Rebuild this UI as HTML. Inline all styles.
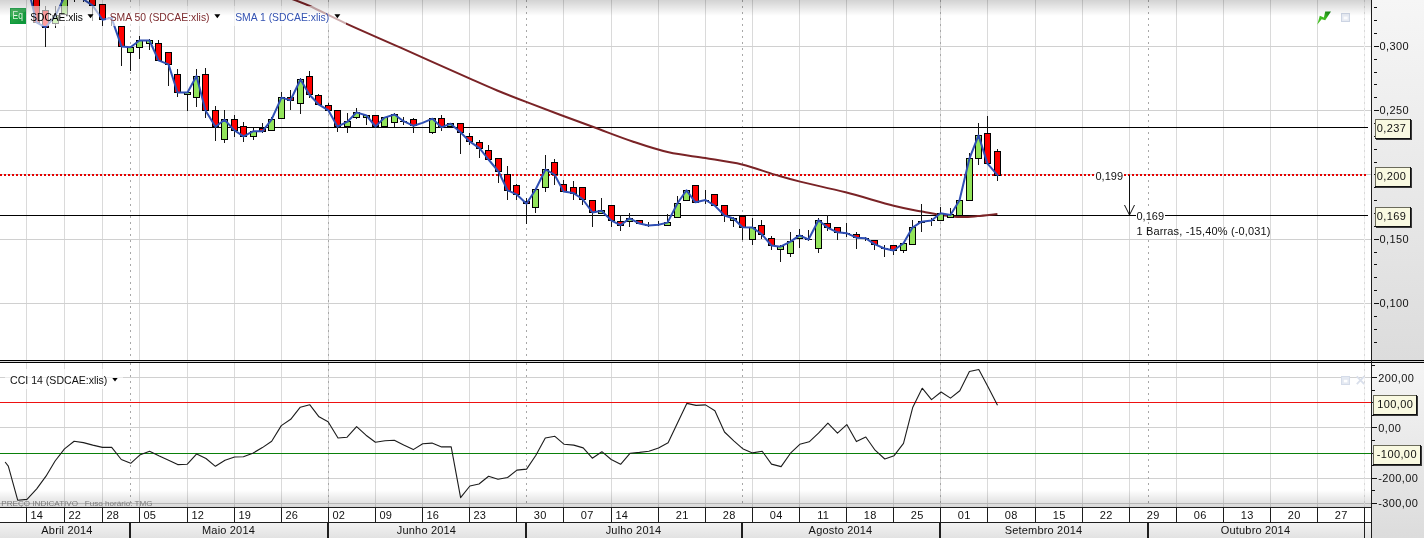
<!DOCTYPE html>
<html><head><meta charset="utf-8"><title>SDCAE:xlis</title>
<style>
html,body{margin:0;padding:0;background:#fff;}
body{width:1424px;height:538px;overflow:hidden;}
svg{display:block;font-family:"Liberation Sans",sans-serif;will-change:transform;}
</style></head><body>
<svg width="1424" height="538" viewBox="0 0 1424 538">
<defs>
<linearGradient id="gt" x1="0" y1="0" x2="0" y2="1"><stop offset="0" stop-color="#000" stop-opacity="0.175"/><stop offset="1" stop-color="#000" stop-opacity="0"/></linearGradient>
<linearGradient id="gb" x1="0" y1="0" x2="0" y2="1"><stop offset="0" stop-color="#000" stop-opacity="0"/><stop offset="1" stop-color="#000" stop-opacity="0.15"/></linearGradient>
<linearGradient id="ga1" x1="0" y1="0" x2="0" y2="1"><stop offset="0" stop-color="#f6f6f6"/><stop offset="1" stop-color="#dcdcdc"/></linearGradient>
<linearGradient id="ga2" x1="0" y1="0" x2="0" y2="1"><stop offset="0" stop-color="#f5f5f5"/><stop offset="1" stop-color="#dcdcdc"/></linearGradient>
<linearGradient id="gm" x1="0" y1="0" x2="0" y2="1"><stop offset="0" stop-color="#f2f2f2"/><stop offset="1" stop-color="#e2e2e2"/></linearGradient>
<linearGradient id="gi" x1="0" y1="0" x2="1" y2="1"><stop offset="0" stop-color="#35b04a"/><stop offset="1" stop-color="#0a9038"/></linearGradient>
<linearGradient id="gl" x1="0" y1="1" x2="1" y2="0"><stop offset="0" stop-color="#4cc828"/><stop offset="0.55" stop-color="#3cb820"/><stop offset="1" stop-color="#0e7a12"/></linearGradient>
<clipPath id="cm"><rect x="0" y="0" width="1371" height="360"/></clipPath>
<clipPath id="cl"><rect x="0" y="363" width="1371" height="144"/></clipPath>
</defs>
<rect x="0" y="0" width="1424" height="538" fill="#fff"/>

<rect x="1372" y="0" width="52" height="360" fill="url(#ga1)"/>
<rect x="1372" y="363" width="52" height="175" fill="url(#ga2)"/>
<g shape-rendering="crispEdges">
<rect x="26" y="0" width="1" height="360" fill="#dadada"/>
<rect x="26" y="363" width="1" height="144" fill="#dadada"/>
<rect x="64" y="0" width="1" height="360" fill="#dadada"/>
<rect x="64" y="363" width="1" height="144" fill="#dadada"/>
<rect x="102" y="0" width="1" height="360" fill="#dadada"/>
<rect x="102" y="363" width="1" height="144" fill="#dadada"/>
<rect x="139" y="0" width="1" height="360" fill="#dadada"/>
<rect x="139" y="363" width="1" height="144" fill="#dadada"/>
<rect x="187" y="0" width="1" height="360" fill="#dadada"/>
<rect x="187" y="363" width="1" height="144" fill="#dadada"/>
<rect x="234" y="0" width="1" height="360" fill="#dadada"/>
<rect x="234" y="363" width="1" height="144" fill="#dadada"/>
<rect x="281" y="0" width="1" height="360" fill="#dadada"/>
<rect x="281" y="363" width="1" height="144" fill="#dadada"/>
<rect x="328" y="0" width="1" height="360" fill="#dadada"/>
<rect x="328" y="363" width="1" height="144" fill="#dadada"/>
<rect x="375" y="0" width="1" height="360" fill="#dadada"/>
<rect x="375" y="363" width="1" height="144" fill="#dadada"/>
<rect x="422" y="0" width="1" height="360" fill="#dadada"/>
<rect x="422" y="363" width="1" height="144" fill="#dadada"/>
<rect x="469" y="0" width="1" height="360" fill="#dadada"/>
<rect x="469" y="363" width="1" height="144" fill="#dadada"/>
<rect x="516" y="0" width="1" height="360" fill="#dadada"/>
<rect x="516" y="363" width="1" height="144" fill="#dadada"/>
<rect x="563" y="0" width="1" height="360" fill="#dadada"/>
<rect x="563" y="363" width="1" height="144" fill="#dadada"/>
<rect x="611" y="0" width="1" height="360" fill="#dadada"/>
<rect x="611" y="363" width="1" height="144" fill="#dadada"/>
<rect x="658" y="0" width="1" height="360" fill="#dadada"/>
<rect x="658" y="363" width="1" height="144" fill="#dadada"/>
<rect x="705" y="0" width="1" height="360" fill="#dadada"/>
<rect x="705" y="363" width="1" height="144" fill="#dadada"/>
<rect x="752" y="0" width="1" height="360" fill="#dadada"/>
<rect x="752" y="363" width="1" height="144" fill="#dadada"/>
<rect x="799" y="0" width="1" height="360" fill="#dadada"/>
<rect x="799" y="363" width="1" height="144" fill="#dadada"/>
<rect x="846" y="0" width="1" height="360" fill="#dadada"/>
<rect x="846" y="363" width="1" height="144" fill="#dadada"/>
<rect x="893" y="0" width="1" height="360" fill="#dadada"/>
<rect x="893" y="363" width="1" height="144" fill="#dadada"/>
<rect x="940" y="0" width="1" height="360" fill="#dadada"/>
<rect x="940" y="363" width="1" height="144" fill="#dadada"/>
<rect x="987" y="0" width="1" height="360" fill="#dadada"/>
<rect x="987" y="363" width="1" height="144" fill="#dadada"/>
<rect x="1035" y="0" width="1" height="360" fill="#dadada"/>
<rect x="1035" y="363" width="1" height="144" fill="#dadada"/>
<rect x="1082" y="0" width="1" height="360" fill="#dadada"/>
<rect x="1082" y="363" width="1" height="144" fill="#dadada"/>
<rect x="1129" y="0" width="1" height="360" fill="#dadada"/>
<rect x="1129" y="363" width="1" height="144" fill="#dadada"/>
<rect x="1176" y="0" width="1" height="360" fill="#dadada"/>
<rect x="1176" y="363" width="1" height="144" fill="#dadada"/>
<rect x="1223" y="0" width="1" height="360" fill="#dadada"/>
<rect x="1223" y="363" width="1" height="144" fill="#dadada"/>
<rect x="1270" y="0" width="1" height="360" fill="#dadada"/>
<rect x="1270" y="363" width="1" height="144" fill="#dadada"/>
<rect x="1317" y="0" width="1" height="360" fill="#dadada"/>
<rect x="1317" y="363" width="1" height="144" fill="#dadada"/>
<rect x="0" y="46" width="1371" height="1" fill="#d0d0d0"/>
<rect x="0" y="110" width="1371" height="1" fill="#d0d0d0"/>
<rect x="0" y="174" width="1371" height="1" fill="#d0d0d0"/>
<rect x="0" y="239" width="1371" height="1" fill="#d0d0d0"/>
<rect x="0" y="303" width="1371" height="1" fill="#d0d0d0"/>
<rect x="0" y="377" width="1371" height="1" fill="#d0d0d0"/>
<rect x="0" y="427" width="1371" height="1" fill="#d0d0d0"/>
<rect x="0" y="478" width="1371" height="1" fill="#d0d0d0"/>
<rect x="0" y="503" width="1371" height="1" fill="#d0d0d0"/>
</g>
<line x1="130.5" y1="0" x2="130.5" y2="360" stroke="#a8a8a8" stroke-width="1" stroke-dasharray="2,4" shape-rendering="crispEdges"/>
<line x1="130.5" y1="363" x2="130.5" y2="507" stroke="#a8a8a8" stroke-width="1" stroke-dasharray="2,4" shape-rendering="crispEdges"/>
<line x1="328.5" y1="0" x2="328.5" y2="360" stroke="#a8a8a8" stroke-width="1" stroke-dasharray="2,4" shape-rendering="crispEdges"/>
<line x1="328.5" y1="363" x2="328.5" y2="507" stroke="#a8a8a8" stroke-width="1" stroke-dasharray="2,4" shape-rendering="crispEdges"/>
<line x1="526.5" y1="0" x2="526.5" y2="360" stroke="#a8a8a8" stroke-width="1" stroke-dasharray="2,4" shape-rendering="crispEdges"/>
<line x1="526.5" y1="363" x2="526.5" y2="507" stroke="#a8a8a8" stroke-width="1" stroke-dasharray="2,4" shape-rendering="crispEdges"/>
<line x1="742.5" y1="0" x2="742.5" y2="360" stroke="#a8a8a8" stroke-width="1" stroke-dasharray="2,4" shape-rendering="crispEdges"/>
<line x1="742.5" y1="363" x2="742.5" y2="507" stroke="#a8a8a8" stroke-width="1" stroke-dasharray="2,4" shape-rendering="crispEdges"/>
<line x1="940.5" y1="0" x2="940.5" y2="360" stroke="#a8a8a8" stroke-width="1" stroke-dasharray="2,4" shape-rendering="crispEdges"/>
<line x1="940.5" y1="363" x2="940.5" y2="507" stroke="#a8a8a8" stroke-width="1" stroke-dasharray="2,4" shape-rendering="crispEdges"/>
<line x1="1148.5" y1="0" x2="1148.5" y2="360" stroke="#a8a8a8" stroke-width="1" stroke-dasharray="2,4" shape-rendering="crispEdges"/>
<line x1="1148.5" y1="363" x2="1148.5" y2="507" stroke="#a8a8a8" stroke-width="1" stroke-dasharray="2,4" shape-rendering="crispEdges"/>
<rect x="1364" y="0" width="1" height="360" fill="#f0f0f0" shape-rendering="crispEdges"/>
<rect x="1364" y="363" width="1" height="144" fill="#f0f0f0" shape-rendering="crispEdges"/>
<line x1="1364.5" y1="0" x2="1364.5" y2="360" stroke="#d9d9d9" stroke-width="1" stroke-dasharray="2,4" shape-rendering="crispEdges"/>
<line x1="1364.5" y1="363" x2="1364.5" y2="507" stroke="#d9d9d9" stroke-width="1" stroke-dasharray="2,4" shape-rendering="crispEdges"/>
<g shape-rendering="crispEdges">
<rect x="0" y="127" width="1368" height="1" fill="#000"/>
<rect x="0" y="215" width="1368" height="1" fill="#000"/>
</g>
<line x1="0" y1="175" x2="1368" y2="175" stroke="#e60000" stroke-width="2" stroke-dasharray="2,2" shape-rendering="crispEdges"/>
<g clip-path="url(#cm)">
<path d="M285.0 -3.5 C288.9 -2.0 298.4 1.0 308.6 5.5 C318.8 10.0 331.0 16.6 346.2 23.6 C361.4 30.6 379.5 38.3 400.0 47.4 C420.5 56.5 453.2 71.2 469.4 78.4 C485.6 85.6 487.5 86.5 497.2 90.5 C506.9 94.5 517.0 98.4 527.5 102.4 C538.0 106.4 548.7 110.5 560.0 114.7 C571.3 118.9 583.2 123.3 595.4 127.8 C607.6 132.3 621.1 137.6 633.3 141.7 C645.5 145.8 656.7 149.6 668.7 152.3 C680.7 155.0 693.1 156.1 705.3 158.1 C717.5 160.1 730.4 161.8 742.0 164.5 C753.6 167.2 765.2 171.8 774.9 174.6 C784.6 177.4 788.3 178.6 800.1 181.6 C811.9 184.6 830.0 188.3 845.6 192.3 C861.2 196.3 881.0 202.5 893.7 205.7 C906.4 208.9 914.2 210.1 922.0 211.6 C929.8 213.1 934.1 214.0 940.6 214.9 C947.1 215.8 954.6 216.8 960.8 217.0 C967.0 217.2 971.6 216.6 977.7 216.1 C983.8 215.6 994.1 214.4 997.4 214.1" fill="none" stroke="#7a2326" stroke-width="2" stroke-linejoin="round"/>
<g shape-rendering="crispEdges">
<rect x="33" y="-5" width="7" height="28" fill="#000"/>
<rect x="34" y="-4" width="5" height="26" fill="#ff0000"/>
<rect x="45" y="6" width="1" height="41" fill="#141414"/>
<rect x="42" y="10" width="7" height="18" fill="#000"/>
<rect x="43" y="11" width="5" height="16" fill="#ff0000"/>
<rect x="55" y="6" width="1" height="22" fill="#141414"/>
<rect x="52" y="15" width="7" height="9" fill="#000"/>
<rect x="53" y="16" width="5" height="7" fill="#92e45a"/>
<rect x="61" y="-5" width="7" height="20" fill="#000"/>
<rect x="62" y="-4" width="5" height="18" fill="#92e45a"/>
<rect x="74" y="-5" width="1" height="7" fill="#141414"/>
<rect x="83" y="-5" width="1" height="7" fill="#141414"/>
<rect x="92" y="-5" width="1" height="26" fill="#141414"/>
<rect x="89" y="-5" width="7" height="11" fill="#000"/>
<rect x="90" y="-4" width="5" height="9" fill="#ff0000"/>
<rect x="102" y="4" width="1" height="22" fill="#141414"/>
<rect x="99" y="4" width="7" height="16" fill="#000"/>
<rect x="100" y="5" width="5" height="14" fill="#ff0000"/>
<rect x="111" y="16" width="1" height="10" fill="#141414"/>
<rect x="108" y="17" width="7" height="1" fill="#000"/>
<rect x="121" y="26" width="1" height="40" fill="#141414"/>
<rect x="118" y="26" width="7" height="21" fill="#000"/>
<rect x="119" y="27" width="5" height="19" fill="#ff0000"/>
<rect x="130" y="46" width="1" height="25" fill="#141414"/>
<rect x="127" y="47" width="7" height="6" fill="#000"/>
<rect x="128" y="48" width="5" height="4" fill="#92e45a"/>
<rect x="139" y="36" width="1" height="23" fill="#141414"/>
<rect x="136" y="40" width="7" height="8" fill="#000"/>
<rect x="137" y="41" width="5" height="6" fill="#92e45a"/>
<rect x="149" y="39" width="1" height="11" fill="#141414"/>
<rect x="146" y="40" width="7" height="4" fill="#000"/>
<rect x="147" y="41" width="5" height="2" fill="#92e45a"/>
<rect x="158" y="40" width="1" height="21" fill="#141414"/>
<rect x="155" y="43" width="7" height="18" fill="#000"/>
<rect x="156" y="44" width="5" height="16" fill="#ff0000"/>
<rect x="168" y="52" width="1" height="34" fill="#141414"/>
<rect x="165" y="52" width="7" height="13" fill="#000"/>
<rect x="166" y="53" width="5" height="11" fill="#ff0000"/>
<rect x="177" y="69" width="1" height="28" fill="#141414"/>
<rect x="174" y="74" width="7" height="19" fill="#000"/>
<rect x="175" y="75" width="5" height="17" fill="#ff0000"/>
<rect x="187" y="92" width="1" height="19" fill="#141414"/>
<rect x="184" y="92" width="7" height="3" fill="#000"/>
<rect x="185" y="93" width="5" height="1" fill="#92e45a"/>
<rect x="196" y="69" width="1" height="38" fill="#141414"/>
<rect x="193" y="76" width="7" height="22" fill="#000"/>
<rect x="194" y="77" width="5" height="20" fill="#92e45a"/>
<rect x="205" y="68" width="1" height="50" fill="#141414"/>
<rect x="202" y="74" width="7" height="37" fill="#000"/>
<rect x="203" y="75" width="5" height="35" fill="#ff0000"/>
<rect x="215" y="106" width="1" height="35" fill="#141414"/>
<rect x="212" y="110" width="7" height="17" fill="#000"/>
<rect x="213" y="111" width="5" height="15" fill="#ff0000"/>
<rect x="224" y="110" width="1" height="33" fill="#141414"/>
<rect x="221" y="119" width="7" height="21" fill="#000"/>
<rect x="222" y="120" width="5" height="19" fill="#92e45a"/>
<rect x="234" y="115" width="1" height="22" fill="#141414"/>
<rect x="231" y="119" width="7" height="12" fill="#000"/>
<rect x="232" y="120" width="5" height="10" fill="#ff0000"/>
<rect x="243" y="122" width="1" height="20" fill="#141414"/>
<rect x="240" y="126" width="7" height="11" fill="#000"/>
<rect x="241" y="127" width="5" height="9" fill="#ff0000"/>
<rect x="253" y="128" width="1" height="12" fill="#141414"/>
<rect x="250" y="131" width="7" height="6" fill="#000"/>
<rect x="251" y="132" width="5" height="4" fill="#92e45a"/>
<rect x="262" y="123" width="1" height="10" fill="#141414"/>
<rect x="259" y="128" width="7" height="4" fill="#000"/>
<rect x="260" y="129" width="5" height="2" fill="#ff0000"/>
<rect x="271" y="117" width="1" height="14" fill="#141414"/>
<rect x="268" y="119" width="7" height="12" fill="#000"/>
<rect x="269" y="120" width="5" height="10" fill="#92e45a"/>
<rect x="281" y="92" width="1" height="27" fill="#141414"/>
<rect x="278" y="97" width="7" height="22" fill="#000"/>
<rect x="279" y="98" width="5" height="20" fill="#92e45a"/>
<rect x="290" y="90" width="1" height="20" fill="#141414"/>
<rect x="287" y="97" width="7" height="4" fill="#000"/>
<rect x="288" y="98" width="5" height="2" fill="#ff0000"/>
<rect x="300" y="78" width="1" height="36" fill="#141414"/>
<rect x="297" y="79" width="7" height="25" fill="#000"/>
<rect x="298" y="80" width="5" height="23" fill="#92e45a"/>
<rect x="309" y="71" width="1" height="27" fill="#141414"/>
<rect x="306" y="76" width="7" height="19" fill="#000"/>
<rect x="307" y="77" width="5" height="17" fill="#ff0000"/>
<rect x="318" y="94" width="1" height="11" fill="#141414"/>
<rect x="315" y="95" width="7" height="10" fill="#000"/>
<rect x="316" y="96" width="5" height="8" fill="#ff0000"/>
<rect x="328" y="103" width="1" height="8" fill="#141414"/>
<rect x="325" y="105" width="7" height="6" fill="#000"/>
<rect x="326" y="106" width="5" height="4" fill="#ff0000"/>
<rect x="337" y="110" width="1" height="22" fill="#141414"/>
<rect x="334" y="110" width="7" height="17" fill="#000"/>
<rect x="335" y="111" width="5" height="15" fill="#ff0000"/>
<rect x="347" y="113" width="1" height="20" fill="#141414"/>
<rect x="344" y="121" width="7" height="6" fill="#000"/>
<rect x="345" y="122" width="5" height="4" fill="#92e45a"/>
<rect x="356" y="108" width="1" height="11" fill="#141414"/>
<rect x="353" y="112" width="7" height="6" fill="#000"/>
<rect x="354" y="113" width="5" height="4" fill="#92e45a"/>
<rect x="366" y="115" width="1" height="10" fill="#141414"/>
<rect x="363" y="115" width="7" height="3" fill="#000"/>
<rect x="364" y="116" width="5" height="1" fill="#92e45a"/>
<rect x="372" y="115" width="7" height="12" fill="#000"/>
<rect x="373" y="116" width="5" height="10" fill="#ff0000"/>
<rect x="381" y="117" width="7" height="10" fill="#000"/>
<rect x="382" y="118" width="5" height="8" fill="#92e45a"/>
<rect x="394" y="113" width="1" height="14" fill="#141414"/>
<rect x="391" y="114" width="7" height="9" fill="#000"/>
<rect x="392" y="115" width="5" height="7" fill="#92e45a"/>
<rect x="403" y="117" width="1" height="8" fill="#141414"/>
<rect x="400" y="121" width="7" height="1" fill="#000"/>
<rect x="413" y="118" width="1" height="15" fill="#141414"/>
<rect x="410" y="119" width="7" height="7" fill="#000"/>
<rect x="411" y="120" width="5" height="5" fill="#ff0000"/>
<rect x="432" y="118" width="1" height="16" fill="#141414"/>
<rect x="429" y="118" width="7" height="15" fill="#000"/>
<rect x="430" y="119" width="5" height="13" fill="#92e45a"/>
<rect x="441" y="115" width="1" height="16" fill="#141414"/>
<rect x="438" y="118" width="7" height="10" fill="#000"/>
<rect x="439" y="119" width="5" height="8" fill="#ff0000"/>
<rect x="447" y="123" width="7" height="4" fill="#000"/>
<rect x="448" y="124" width="5" height="2" fill="#92e45a"/>
<rect x="460" y="123" width="1" height="31" fill="#141414"/>
<rect x="457" y="123" width="7" height="10" fill="#000"/>
<rect x="458" y="124" width="5" height="8" fill="#ff0000"/>
<rect x="469" y="133" width="1" height="12" fill="#141414"/>
<rect x="466" y="136" width="7" height="6" fill="#000"/>
<rect x="467" y="137" width="5" height="4" fill="#ff0000"/>
<rect x="479" y="140" width="1" height="18" fill="#141414"/>
<rect x="476" y="142" width="7" height="7" fill="#000"/>
<rect x="477" y="143" width="5" height="5" fill="#ff0000"/>
<rect x="488" y="145" width="1" height="15" fill="#141414"/>
<rect x="485" y="150" width="7" height="10" fill="#000"/>
<rect x="486" y="151" width="5" height="8" fill="#ff0000"/>
<rect x="498" y="158" width="1" height="25" fill="#141414"/>
<rect x="495" y="158" width="7" height="14" fill="#000"/>
<rect x="496" y="159" width="5" height="12" fill="#ff0000"/>
<rect x="507" y="166" width="1" height="34" fill="#141414"/>
<rect x="504" y="174" width="7" height="17" fill="#000"/>
<rect x="505" y="175" width="5" height="15" fill="#ff0000"/>
<rect x="516" y="184" width="1" height="16" fill="#141414"/>
<rect x="513" y="185" width="7" height="10" fill="#000"/>
<rect x="514" y="186" width="5" height="8" fill="#ff0000"/>
<rect x="526" y="198" width="1" height="26" fill="#141414"/>
<rect x="523" y="201" width="7" height="3" fill="#000"/>
<rect x="524" y="202" width="5" height="1" fill="#ff0000"/>
<rect x="535" y="188" width="1" height="25" fill="#141414"/>
<rect x="532" y="189" width="7" height="19" fill="#000"/>
<rect x="533" y="190" width="5" height="17" fill="#92e45a"/>
<rect x="545" y="155" width="1" height="37" fill="#141414"/>
<rect x="542" y="169" width="7" height="19" fill="#000"/>
<rect x="543" y="170" width="5" height="17" fill="#92e45a"/>
<rect x="554" y="159" width="1" height="26" fill="#141414"/>
<rect x="551" y="162" width="7" height="13" fill="#000"/>
<rect x="552" y="163" width="5" height="11" fill="#ff0000"/>
<rect x="563" y="180" width="1" height="12" fill="#141414"/>
<rect x="560" y="184" width="7" height="8" fill="#000"/>
<rect x="561" y="185" width="5" height="6" fill="#ff0000"/>
<rect x="573" y="181" width="1" height="19" fill="#141414"/>
<rect x="570" y="187" width="7" height="7" fill="#000"/>
<rect x="571" y="188" width="5" height="5" fill="#ff0000"/>
<rect x="582" y="187" width="1" height="18" fill="#141414"/>
<rect x="579" y="187" width="7" height="13" fill="#000"/>
<rect x="580" y="188" width="5" height="11" fill="#ff0000"/>
<rect x="592" y="200" width="1" height="27" fill="#141414"/>
<rect x="589" y="200" width="7" height="13" fill="#000"/>
<rect x="590" y="201" width="5" height="11" fill="#ff0000"/>
<rect x="601" y="198" width="1" height="16" fill="#141414"/>
<rect x="598" y="210" width="7" height="4" fill="#000"/>
<rect x="599" y="211" width="5" height="2" fill="#92e45a"/>
<rect x="611" y="205" width="1" height="22" fill="#141414"/>
<rect x="608" y="205" width="7" height="16" fill="#000"/>
<rect x="609" y="206" width="5" height="14" fill="#ff0000"/>
<rect x="620" y="215" width="1" height="16" fill="#141414"/>
<rect x="617" y="221" width="7" height="5" fill="#000"/>
<rect x="618" y="222" width="5" height="3" fill="#ff0000"/>
<rect x="629" y="213" width="1" height="14" fill="#141414"/>
<rect x="626" y="218" width="7" height="4" fill="#000"/>
<rect x="627" y="219" width="5" height="2" fill="#92e45a"/>
<rect x="636" y="220" width="7" height="4" fill="#000"/>
<rect x="637" y="221" width="5" height="2" fill="#ff0000"/>
<rect x="648" y="222" width="1" height="5" fill="#141414"/>
<rect x="645" y="225" width="7" height="1" fill="#000"/>
<rect x="658" y="221" width="1" height="5" fill="#141414"/>
<rect x="655" y="224" width="7" height="1" fill="#000"/>
<rect x="667" y="214" width="1" height="12" fill="#141414"/>
<rect x="664" y="222" width="7" height="4" fill="#000"/>
<rect x="665" y="223" width="5" height="2" fill="#92e45a"/>
<rect x="677" y="196" width="1" height="22" fill="#141414"/>
<rect x="674" y="203" width="7" height="15" fill="#000"/>
<rect x="675" y="204" width="5" height="13" fill="#92e45a"/>
<rect x="683" y="190" width="7" height="11" fill="#000"/>
<rect x="684" y="191" width="5" height="9" fill="#92e45a"/>
<rect x="692" y="185" width="7" height="18" fill="#000"/>
<rect x="693" y="186" width="5" height="16" fill="#ff0000"/>
<rect x="705" y="190" width="1" height="14" fill="#141414"/>
<rect x="702" y="200" width="7" height="1" fill="#000"/>
<rect x="711" y="194" width="7" height="12" fill="#000"/>
<rect x="712" y="195" width="5" height="10" fill="#ff0000"/>
<rect x="724" y="205" width="1" height="17" fill="#141414"/>
<rect x="721" y="205" width="7" height="11" fill="#000"/>
<rect x="722" y="206" width="5" height="9" fill="#ff0000"/>
<rect x="733" y="217" width="1" height="10" fill="#141414"/>
<rect x="730" y="218" width="7" height="3" fill="#000"/>
<rect x="731" y="219" width="5" height="1" fill="#92e45a"/>
<rect x="742" y="216" width="1" height="24" fill="#141414"/>
<rect x="739" y="216" width="7" height="12" fill="#000"/>
<rect x="740" y="217" width="5" height="10" fill="#ff0000"/>
<rect x="752" y="218" width="1" height="27" fill="#141414"/>
<rect x="749" y="227" width="7" height="13" fill="#000"/>
<rect x="750" y="228" width="5" height="11" fill="#92e45a"/>
<rect x="761" y="220" width="1" height="19" fill="#141414"/>
<rect x="758" y="225" width="7" height="10" fill="#000"/>
<rect x="759" y="226" width="5" height="8" fill="#ff0000"/>
<rect x="771" y="236" width="1" height="14" fill="#141414"/>
<rect x="768" y="238" width="7" height="8" fill="#000"/>
<rect x="769" y="239" width="5" height="6" fill="#ff0000"/>
<rect x="780" y="245" width="1" height="17" fill="#141414"/>
<rect x="777" y="246" width="7" height="4" fill="#000"/>
<rect x="778" y="247" width="5" height="2" fill="#92e45a"/>
<rect x="790" y="232" width="1" height="25" fill="#141414"/>
<rect x="787" y="241" width="7" height="13" fill="#000"/>
<rect x="788" y="242" width="5" height="11" fill="#92e45a"/>
<rect x="799" y="229" width="1" height="19" fill="#141414"/>
<rect x="796" y="235" width="7" height="4" fill="#000"/>
<rect x="797" y="236" width="5" height="2" fill="#92e45a"/>
<rect x="808" y="230" width="1" height="11" fill="#141414"/>
<rect x="805" y="239" width="7" height="1" fill="#000"/>
<rect x="818" y="218" width="1" height="35" fill="#141414"/>
<rect x="815" y="220" width="7" height="29" fill="#000"/>
<rect x="816" y="221" width="5" height="27" fill="#92e45a"/>
<rect x="827" y="215" width="1" height="16" fill="#141414"/>
<rect x="824" y="223" width="7" height="5" fill="#000"/>
<rect x="825" y="224" width="5" height="3" fill="#ff0000"/>
<rect x="837" y="227" width="1" height="13" fill="#141414"/>
<rect x="834" y="227" width="7" height="6" fill="#000"/>
<rect x="835" y="228" width="5" height="4" fill="#ff0000"/>
<rect x="846" y="223" width="1" height="14" fill="#141414"/>
<rect x="843" y="233" width="7" height="1" fill="#000"/>
<rect x="856" y="232" width="1" height="17" fill="#141414"/>
<rect x="853" y="234" width="7" height="4" fill="#000"/>
<rect x="854" y="235" width="5" height="2" fill="#ff0000"/>
<rect x="865" y="237" width="1" height="4" fill="#141414"/>
<rect x="862" y="238" width="7" height="1" fill="#000"/>
<rect x="874" y="240" width="1" height="10" fill="#141414"/>
<rect x="871" y="240" width="7" height="5" fill="#000"/>
<rect x="872" y="241" width="5" height="3" fill="#ff0000"/>
<rect x="884" y="245" width="1" height="12" fill="#141414"/>
<rect x="881" y="248" width="7" height="1" fill="#000"/>
<rect x="893" y="245" width="1" height="10" fill="#141414"/>
<rect x="890" y="245" width="7" height="6" fill="#000"/>
<rect x="891" y="246" width="5" height="4" fill="#ff0000"/>
<rect x="903" y="243" width="1" height="10" fill="#141414"/>
<rect x="900" y="243" width="7" height="8" fill="#000"/>
<rect x="901" y="244" width="5" height="6" fill="#92e45a"/>
<rect x="912" y="220" width="1" height="25" fill="#141414"/>
<rect x="909" y="227" width="7" height="18" fill="#000"/>
<rect x="910" y="228" width="5" height="16" fill="#92e45a"/>
<rect x="921" y="204" width="1" height="28" fill="#141414"/>
<rect x="918" y="221" width="7" height="2" fill="#000"/>
<rect x="931" y="218" width="1" height="8" fill="#141414"/>
<rect x="928" y="220" width="7" height="1" fill="#000"/>
<rect x="940" y="207" width="1" height="14" fill="#141414"/>
<rect x="937" y="213" width="7" height="8" fill="#000"/>
<rect x="938" y="214" width="5" height="6" fill="#92e45a"/>
<rect x="950" y="208" width="1" height="10" fill="#141414"/>
<rect x="947" y="214" width="7" height="4" fill="#000"/>
<rect x="948" y="215" width="5" height="2" fill="#92e45a"/>
<rect x="959" y="198" width="1" height="18" fill="#141414"/>
<rect x="956" y="200" width="7" height="16" fill="#000"/>
<rect x="957" y="201" width="5" height="14" fill="#92e45a"/>
<rect x="969" y="153" width="1" height="48" fill="#141414"/>
<rect x="966" y="158" width="7" height="43" fill="#000"/>
<rect x="967" y="159" width="5" height="41" fill="#92e45a"/>
<rect x="978" y="123" width="1" height="42" fill="#141414"/>
<rect x="975" y="135" width="7" height="24" fill="#000"/>
<rect x="976" y="136" width="5" height="22" fill="#92e45a"/>
<rect x="987" y="116" width="1" height="48" fill="#141414"/>
<rect x="984" y="133" width="7" height="31" fill="#000"/>
<rect x="985" y="134" width="5" height="29" fill="#ff0000"/>
<rect x="997" y="149" width="1" height="32" fill="#141414"/>
<rect x="994" y="151" width="7" height="25" fill="#000"/>
<rect x="995" y="152" width="5" height="23" fill="#ff0000"/>
</g>
<polyline points="26.5,-18.8 36.5,22.3 45.5,27.4 55.5,15.6 64.5,-3.5 74.5,-8.0 83.5,-0.5 92.5,5.3 102.5,19.8 111.5,17.8 121.5,46.4 130.5,47.2 139.5,40.5 149.5,40.5 158.5,60.4 168.5,64.4 177.5,92.5 187.5,92.5 196.5,76.1 205.5,110.4 215.5,126.7 224.5,119.8 234.5,130.4 243.5,136.4 253.5,131.2 262.5,131.3 271.5,119.7 281.5,97.6 290.5,100.3 300.5,79.5 309.5,94.7 318.5,104.3 328.5,110.4 337.5,126.7 347.5,121.7 356.5,112.4 366.5,115.5 375.5,126.5 384.5,117.6 394.5,114.5 403.5,121.2 413.5,125.8 422.5,122.9 432.5,118.7 441.5,127.4 450.5,123.7 460.5,132.2 469.5,141.4 479.5,148.2 488.5,159.5 498.5,171.5 507.5,190.3 516.5,194.3 526.5,203.7 535.5,189.7 545.5,169.5 554.5,174.5 563.5,191.4 573.5,193.1 582.5,199.0 592.5,212.5 601.5,210.8 611.5,220.6 620.5,225.2 629.5,218.4 639.5,223.5 648.5,225.5 658.5,224.8 667.5,222.6 677.5,203.2 686.5,190.3 695.5,202.3 705.5,200.0 714.5,205.4 724.5,215.5 733.5,218.5 742.5,227.3 752.5,227.6 761.5,234.0 771.5,245.5 780.5,246.7 790.5,241.6 799.5,235.4 808.5,239.5 818.5,220.2 827.5,227.6 837.5,232.3 846.5,233.2 856.5,237.7 865.5,238.2 874.5,244.1 884.5,248.5 893.5,250.5 903.5,243.3 912.5,227.6 921.5,221.7 931.5,220.5 940.5,213.2 950.5,214.9 959.5,200.3 969.5,158.3 978.5,135.4 987.5,163.6 997.5,175.2" fill="none" stroke="#2f4fb4" stroke-width="2" stroke-linejoin="round" stroke-linecap="round"/>
</g>
<g font-size="11px" fill="#111">
<rect x="1095" y="170" width="29" height="12" fill="#fff"/>
<text x="1095.5" y="180">0,199</text>
<rect x="1136" y="210" width="29" height="12" fill="#fff"/>
<text x="1136.5" y="220">0,169</text>
<text x="1136.5" y="235" letter-spacing="0.15">1 Barras, -15,40% (-0,031)</text>
</g>
<path d="M1129.5 175 L1129.5 215 M1124.5 205 L1129.5 215 L1134.5 205" fill="none" stroke="#111" stroke-width="1"/>
<g>
<rect x="28" y="6" width="71" height="20" fill="#fff" fill-opacity="0.62"/>
<rect x="106" y="6" width="119" height="20" fill="#fff" fill-opacity="0.62"/>
<rect x="232" y="6" width="114" height="20" fill="#fff" fill-opacity="0.62"/>
<rect x="10" y="8" width="16" height="16" fill="url(#gi)"/>
<rect x="10.5" y="8.5" width="15" height="15" fill="none" stroke="#0c9a3c" stroke-width="1"/>
<path d="M10 8 L26 8 L26 11.5 L10 17 Z" fill="#fff" fill-opacity="0.13"/>
<text x="12.6" y="19.2" font-size="10.5px" fill="#e4f7e4" textLength="10.4" lengthAdjust="spacingAndGlyphs">Eq</text>
<g font-size="10.5px">
<text x="30.2" y="20.5" fill="#000" textLength="52.8" lengthAdjust="spacingAndGlyphs">SDCAE:xlis</text>
<text x="109.7" y="20.5" fill="#7d2b2e" textLength="99.9" lengthAdjust="spacingAndGlyphs">SMA 50 (SDCAE:xlis)</text>
<text x="235.2" y="20.5" fill="#3453b3" textLength="94" lengthAdjust="spacingAndGlyphs">SMA 1 (SDCAE:xlis)</text>
</g>
<path d="M87.5 14.3 L93.5 14.3 L90.5 18.2 Z" fill="#000"/>
<path d="M214.3 14.3 L220.3 14.3 L217.3 18.2 Z" fill="#000"/>
<path d="M334.4 14.3 L340.4 14.3 L337.4 18.2 Z" fill="#000"/>
</g>
<path d="M1317.2 24.8 L1319.8 15.8 L1323.9 17.4 L1325.2 11.4 L1331 11.4 L1325.2 20.3 L1321.6 19.2 Z" fill="url(#gl)"/>
<rect x="1341.5" y="13.5" width="8" height="8" fill="#e6eaf2" stroke="#ccd4e3" stroke-width="1"/>
<rect x="1343.6" y="16.6" width="4" height="2.8" fill="#fafbfd"/>
<rect x="0" y="0" width="1371" height="16" fill="url(#gt)"/>
<g clip-path="url(#cl)">
<g shape-rendering="crispEdges">
<rect x="0" y="402" width="1371" height="1" fill="#ee1111"/>
<rect x="0" y="453" width="1371" height="1" fill="#0a800a"/>
</g>
<polyline points="5.1,462.0 8.3,466.1 17.7,500.2 27.0,499.4 36.7,488.8 46.0,476.2 55.1,461.0 64.5,448.9 74.1,441.3 83.4,442.6 92.8,445.1 102.4,447.4 111.7,447.4 121.3,459.5 130.7,463.3 140.3,454.7 149.6,451.2 159.3,456.0 168.6,460.3 177.7,464.6 187.1,464.3 196.7,453.9 206.0,458.5 215.4,466.3 225.0,460.3 234.6,457.0 243.4,456.7 252.8,453.2 262.4,447.6 271.7,441.3 281.3,425.6 290.7,419.3 300.3,407.2 309.7,404.7 319.0,416.8 328.1,421.8 338.0,438.0 347.1,437.2 356.6,426.6 366.0,435.2 375.4,442.3 385.0,440.8 394.3,440.3 403.7,445.1 413.3,449.6 422.7,443.8 432.0,443.1 441.6,446.9 451.2,446.9 460.6,497.7 469.9,486.0 479.0,484.0 488.6,476.2 498.0,479.2 507.6,477.5 516.9,470.1 526.6,469.1 535.9,455.2 545.3,438.0 554.9,436.3 564.2,444.3 573.8,445.1 583.2,447.9 592.3,458.2 601.9,451.7 611.2,459.5 620.6,464.3 630.2,453.2 639.5,452.4 648.9,451.2 658.5,447.9 668.1,442.8 677.5,423.1 686.8,403.4 696.1,405.4 705.5,404.9 714.9,410.7 724.5,432.0 733.8,440.8 743.2,449.1 752.5,452.9 762.2,451.2 771.5,464.1 781.1,466.6 790.5,453.2 799.8,444.3 809.2,441.8 818.5,433.2 827.9,423.1 837.5,433.2 846.8,424.6 856.4,441.6 865.8,437.0 875.1,450.2 884.8,459.0 894.1,455.7 903.5,443.3 912.8,407.2 922.2,388.2 931.5,399.6 941.1,392.0 950.5,398.1 959.8,390.8 969.4,371.5 978.8,369.5 988.1,387.0 997.5,405.2" fill="none" stroke="#1c1c1c" stroke-width="1.1" stroke-linejoin="round"/>
</g>
<rect x="5" y="369" width="118" height="20" fill="#fff" fill-opacity="0.62"/>
<text x="10.1" y="383.6" font-size="10.5px" fill="#111" textLength="97.3" lengthAdjust="spacingAndGlyphs">CCI 14 (SDCAE:xlis)</text>
<path d="M112.3 378 L117.7 378 L115 381.6 Z" fill="#000"/>
<text x="1.3" y="505.5" font-size="8.1px" fill="#8c8c8c" style="white-space:pre" xml:space="preserve">PREÇO INDICATIVO   Fuso horário: TMG</text>
<rect x="0" y="490" width="1371" height="17" fill="url(#gb)"/>
<rect x="1341.5" y="376.5" width="8" height="8" fill="#e4e9f2" stroke="#d5dce9" stroke-width="1"/>
<rect x="1343.8" y="379.8" width="3.6" height="2.6" fill="#ffffff"/>
<path d="M1356.8 376.3 L1364.2 384.2 M1364.2 376.3 L1356.8 384.2" stroke="#d9dfeb" stroke-width="1.8" fill="none"/>
<g shape-rendering="crispEdges">
<rect x="0" y="360" width="1424" height="1" fill="#000"/>
<rect x="0" y="361" width="1424" height="1" fill="#d8d8d8"/>
<rect x="0" y="362" width="1424" height="1" fill="#000"/>
<rect x="1371" y="0" width="1" height="538" fill="#1e1e1e"/>
<rect x="1374" y="7" width="3" height="1" fill="#111"/>
<rect x="1374" y="20" width="3" height="1" fill="#111"/>
<rect x="1374" y="33" width="3" height="1" fill="#111"/>
<rect x="1374" y="46" width="5" height="1" fill="#111"/>
<rect x="1374" y="59" width="3" height="1" fill="#111"/>
<rect x="1374" y="72" width="3" height="1" fill="#111"/>
<rect x="1374" y="84" width="3" height="1" fill="#111"/>
<rect x="1374" y="97" width="3" height="1" fill="#111"/>
<rect x="1374" y="110" width="5" height="1" fill="#111"/>
<rect x="1374" y="123" width="3" height="1" fill="#111"/>
<rect x="1374" y="136" width="3" height="1" fill="#111"/>
<rect x="1374" y="149" width="3" height="1" fill="#111"/>
<rect x="1374" y="162" width="3" height="1" fill="#111"/>
<rect x="1374" y="174" width="5" height="1" fill="#111"/>
<rect x="1374" y="187" width="3" height="1" fill="#111"/>
<rect x="1374" y="200" width="3" height="1" fill="#111"/>
<rect x="1374" y="213" width="3" height="1" fill="#111"/>
<rect x="1374" y="226" width="3" height="1" fill="#111"/>
<rect x="1374" y="239" width="5" height="1" fill="#111"/>
<rect x="1374" y="252" width="3" height="1" fill="#111"/>
<rect x="1374" y="264" width="3" height="1" fill="#111"/>
<rect x="1374" y="277" width="3" height="1" fill="#111"/>
<rect x="1374" y="290" width="3" height="1" fill="#111"/>
<rect x="1374" y="303" width="5" height="1" fill="#111"/>
<rect x="1374" y="316" width="3" height="1" fill="#111"/>
<rect x="1374" y="329" width="3" height="1" fill="#111"/>
<rect x="1374" y="342" width="3" height="1" fill="#111"/>
<rect x="1372" y="365" width="3" height="1" fill="#111"/>
<rect x="1372" y="377" width="5" height="1" fill="#111"/>
<rect x="1372" y="390" width="3" height="1" fill="#111"/>
<rect x="1372" y="402" width="5" height="1" fill="#111"/>
<rect x="1372" y="415" width="3" height="1" fill="#111"/>
<rect x="1372" y="427" width="5" height="1" fill="#111"/>
<rect x="1372" y="440" width="3" height="1" fill="#111"/>
<rect x="1372" y="453" width="5" height="1" fill="#111"/>
<rect x="1372" y="465" width="3" height="1" fill="#111"/>
<rect x="1372" y="478" width="5" height="1" fill="#111"/>
<rect x="1372" y="490" width="3" height="1" fill="#111"/>
<rect x="1372" y="503" width="5" height="1" fill="#111"/>
</g>
<g font-size="11px" fill="#111">
<text x="1379.6" y="50.2" letter-spacing="0.4">0,300</text>
<text x="1379.6" y="114.2" letter-spacing="0.4">0,250</text>
<text x="1379.6" y="243.2" letter-spacing="0.4">0,150</text>
<text x="1379.6" y="307.2" letter-spacing="0.4">0,100</text>
<text x="1378.2" y="382" letter-spacing="0.4">200,00</text>
<text x="1378.2" y="431.7" letter-spacing="0.4">0,00</text>
<text x="1378.2" y="482.1" letter-spacing="0.4">-200,00</text>
<text x="1378.2" y="506.9" letter-spacing="0.4">-300,00</text>
</g>
<rect x="1376" y="120" width="36" height="20" fill="#3a3a3a" shape-rendering="crispEdges"/>
<rect x="1375" y="119" width="36" height="20" fill="#6a6a5a" shape-rendering="crispEdges"/>
<rect x="1410" y="119" width="1" height="20" fill="#111" shape-rendering="crispEdges"/>
<rect x="1375" y="138" width="36" height="1" fill="#111" shape-rendering="crispEdges"/>
<rect x="1376" y="120" width="34" height="18" fill="#f9f9e1" shape-rendering="crispEdges"/>
<text x="1376.8" y="132" font-size="11px" fill="#111" letter-spacing="0.4">0,237</text>
<rect x="1376" y="168" width="36" height="20" fill="#3a3a3a" shape-rendering="crispEdges"/>
<rect x="1375" y="167" width="36" height="20" fill="#6a6a5a" shape-rendering="crispEdges"/>
<rect x="1410" y="167" width="1" height="20" fill="#111" shape-rendering="crispEdges"/>
<rect x="1375" y="186" width="36" height="1" fill="#111" shape-rendering="crispEdges"/>
<rect x="1376" y="168" width="34" height="18" fill="#f9f9e1" shape-rendering="crispEdges"/>
<text x="1376.8" y="180" font-size="11px" fill="#111" letter-spacing="0.4">0,200</text>
<rect x="1376" y="208" width="36" height="20" fill="#3a3a3a" shape-rendering="crispEdges"/>
<rect x="1375" y="207" width="36" height="20" fill="#6a6a5a" shape-rendering="crispEdges"/>
<rect x="1410" y="207" width="1" height="20" fill="#111" shape-rendering="crispEdges"/>
<rect x="1375" y="226" width="36" height="1" fill="#111" shape-rendering="crispEdges"/>
<rect x="1376" y="208" width="34" height="18" fill="#f9f9e1" shape-rendering="crispEdges"/>
<text x="1376.8" y="220" font-size="11px" fill="#111" letter-spacing="0.4">0,169</text>
<rect x="1374" y="396" width="44" height="20" fill="#3a3a3a" shape-rendering="crispEdges"/>
<rect x="1373" y="395" width="44" height="20" fill="#6a6a5a" shape-rendering="crispEdges"/>
<rect x="1416" y="395" width="1" height="20" fill="#111" shape-rendering="crispEdges"/>
<rect x="1373" y="414" width="44" height="1" fill="#111" shape-rendering="crispEdges"/>
<rect x="1374" y="396" width="42" height="18" fill="#f9f9e1" shape-rendering="crispEdges"/>
<text x="1377.3" y="408" font-size="11px" fill="#111" letter-spacing="0.4">100,00</text>
<rect x="1374" y="446" width="48" height="20" fill="#3a3a3a" shape-rendering="crispEdges"/>
<rect x="1373" y="445" width="48" height="20" fill="#6a6a5a" shape-rendering="crispEdges"/>
<rect x="1420" y="445" width="1" height="20" fill="#111" shape-rendering="crispEdges"/>
<rect x="1373" y="464" width="48" height="1" fill="#111" shape-rendering="crispEdges"/>
<rect x="1374" y="446" width="46" height="18" fill="#f9f9e1" shape-rendering="crispEdges"/>
<text x="1376.8" y="458" font-size="11px" fill="#111" letter-spacing="0.4">-100,00</text>
<g shape-rendering="crispEdges">
<rect x="0" y="508" width="1371" height="14" fill="#fff"/>
<rect x="0" y="523" width="1371" height="15" fill="url(#gm)"/>
<rect x="0" y="507" width="1371" height="1" fill="#1e1e1e"/>
<rect x="0" y="522" width="1371" height="1" fill="#1e1e1e"/>
<rect x="26" y="507" width="1" height="15" fill="#1e1e1e"/>
<rect x="64" y="507" width="1" height="15" fill="#1e1e1e"/>
<rect x="102" y="507" width="1" height="15" fill="#1e1e1e"/>
<rect x="139" y="507" width="1" height="15" fill="#1e1e1e"/>
<rect x="187" y="507" width="1" height="15" fill="#1e1e1e"/>
<rect x="234" y="507" width="1" height="15" fill="#1e1e1e"/>
<rect x="281" y="507" width="1" height="15" fill="#1e1e1e"/>
<rect x="328" y="507" width="1" height="15" fill="#1e1e1e"/>
<rect x="375" y="507" width="1" height="15" fill="#1e1e1e"/>
<rect x="422" y="507" width="1" height="15" fill="#1e1e1e"/>
<rect x="469" y="507" width="1" height="15" fill="#1e1e1e"/>
<rect x="516" y="507" width="1" height="15" fill="#1e1e1e"/>
<rect x="563" y="507" width="1" height="15" fill="#1e1e1e"/>
<rect x="611" y="507" width="1" height="15" fill="#1e1e1e"/>
<rect x="658" y="507" width="1" height="15" fill="#1e1e1e"/>
<rect x="705" y="507" width="1" height="15" fill="#1e1e1e"/>
<rect x="752" y="507" width="1" height="15" fill="#1e1e1e"/>
<rect x="799" y="507" width="1" height="15" fill="#1e1e1e"/>
<rect x="846" y="507" width="1" height="15" fill="#1e1e1e"/>
<rect x="893" y="507" width="1" height="15" fill="#1e1e1e"/>
<rect x="940" y="507" width="1" height="15" fill="#1e1e1e"/>
<rect x="987" y="507" width="1" height="15" fill="#1e1e1e"/>
<rect x="1035" y="507" width="1" height="15" fill="#1e1e1e"/>
<rect x="1082" y="507" width="1" height="15" fill="#1e1e1e"/>
<rect x="1129" y="507" width="1" height="15" fill="#1e1e1e"/>
<rect x="1176" y="507" width="1" height="15" fill="#1e1e1e"/>
<rect x="1223" y="507" width="1" height="15" fill="#1e1e1e"/>
<rect x="1270" y="507" width="1" height="15" fill="#1e1e1e"/>
<rect x="1317" y="507" width="1" height="15" fill="#1e1e1e"/>
<rect x="1364" y="507" width="1" height="31" fill="#1e1e1e"/>
<rect x="129" y="522" width="2" height="16" fill="#1e1e1e"/>
<rect x="327" y="522" width="2" height="16" fill="#1e1e1e"/>
<rect x="525" y="522" width="2" height="16" fill="#1e1e1e"/>
<rect x="741" y="522" width="2" height="16" fill="#1e1e1e"/>
<rect x="939" y="522" width="2" height="16" fill="#1e1e1e"/>
<rect x="1147" y="522" width="2" height="16" fill="#1e1e1e"/>
</g>
<g font-size="11px" fill="#111">
<text x="30.4" y="519" letter-spacing="0.3">14</text>
<text x="68.4" y="519" letter-spacing="0.3">22</text>
<text x="106.4" y="519" letter-spacing="0.3">28</text>
<text x="143.4" y="519" letter-spacing="0.3">05</text>
<text x="191.4" y="519" letter-spacing="0.3">12</text>
<text x="238.4" y="519" letter-spacing="0.3">19</text>
<text x="285.4" y="519" letter-spacing="0.3">26</text>
<text x="332.4" y="519" letter-spacing="0.3">02</text>
<text x="379.4" y="519" letter-spacing="0.3">09</text>
<text x="426.4" y="519" letter-spacing="0.3">16</text>
<text x="473.4" y="519" letter-spacing="0.3">23</text>
<text x="540.2" y="519" text-anchor="middle" letter-spacing="0.3">30</text>
<text x="587.2" y="519" text-anchor="middle" letter-spacing="0.3">07</text>
<text x="615.4" y="519" letter-spacing="0.3">14</text>
<text x="682.2" y="519" text-anchor="middle" letter-spacing="0.3">21</text>
<text x="729.2" y="519" text-anchor="middle" letter-spacing="0.3">28</text>
<text x="776.2" y="519" text-anchor="middle" letter-spacing="0.3">04</text>
<text x="823.2" y="519" text-anchor="middle" letter-spacing="0.3">11</text>
<text x="870.2" y="519" text-anchor="middle" letter-spacing="0.3">18</text>
<text x="917.2" y="519" text-anchor="middle" letter-spacing="0.3">25</text>
<text x="964.2" y="519" text-anchor="middle" letter-spacing="0.3">01</text>
<text x="1011.2" y="519" text-anchor="middle" letter-spacing="0.3">08</text>
<text x="1059.2" y="519" text-anchor="middle" letter-spacing="0.3">15</text>
<text x="1106.2" y="519" text-anchor="middle" letter-spacing="0.3">22</text>
<text x="1153.2" y="519" text-anchor="middle" letter-spacing="0.3">29</text>
<text x="1200.2" y="519" text-anchor="middle" letter-spacing="0.3">06</text>
<text x="1247.2" y="519" text-anchor="middle" letter-spacing="0.3">13</text>
<text x="1294.2" y="519" text-anchor="middle" letter-spacing="0.3">20</text>
<text x="1341.2" y="519" text-anchor="middle" letter-spacing="0.3">27</text>
<text x="67.0" y="534" text-anchor="middle" letter-spacing="0.18">Abril 2014</text>
<text x="228.5" y="534" text-anchor="middle" letter-spacing="0.18">Maio 2014</text>
<text x="426.5" y="534" text-anchor="middle" letter-spacing="0.18">Junho 2014</text>
<text x="633.5" y="534" text-anchor="middle" letter-spacing="0.18">Julho 2014</text>
<text x="840.5" y="534" text-anchor="middle" letter-spacing="0.18">Agosto 2014</text>
<text x="1043.5" y="534" text-anchor="middle" letter-spacing="0.18">Setembro 2014</text>
<text x="1255.5" y="534" text-anchor="middle" letter-spacing="0.18">Outubro 2014</text>
</g>
</svg></body></html>
